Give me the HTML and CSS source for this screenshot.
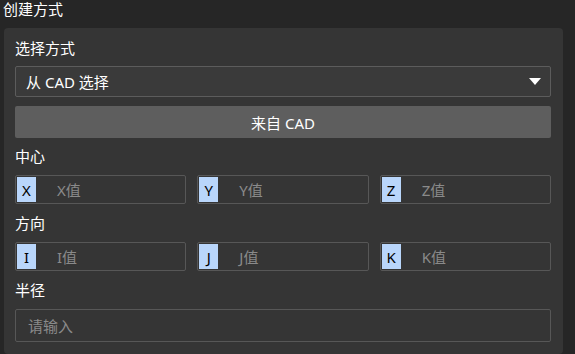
FILE: index.html
```html
<!DOCTYPE html>
<html lang="zh-CN">
<head>
  <meta charset="UTF-8" />
  <title>创建方式</title>
  <link rel="stylesheet" href="styles.css">
</head>
<body>
<div class="title">创建方式</div>

<div class="panel">
  <div class="label">选择方式</div>
  <div class="select">
    <span>从 CAD 选择</span>
    <span class="arrow"></span>
  </div>
  <button class="btn">来自 CAD</button>

  <div class="label">中心</div>
  <div class="row">
    <div class="field"><span class="prefix">X</span><span class="ph">X值</span></div>
    <div class="field"><span class="prefix">Y</span><span class="ph">Y值</span></div>
    <div class="field"><span class="prefix">Z</span><span class="ph">Z值</span></div>
  </div>

  <div class="label">方向</div>
  <div class="row">
    <div class="field"><span class="prefix">I</span><span class="ph">I值</span></div>
    <div class="field"><span class="prefix">J</span><span class="ph">J值</span></div>
    <div class="field"><span class="prefix">K</span><span class="ph">K值</span></div>
  </div>

  <div class="label">半径</div>
  <div class="input">请输入</div>
</div>
</body>
</html>
```

FILE: styles.css
```css
body {
  margin: 0;
  background-color: #262626;
  color: #ffffff;
  font-family: "Noto Sans", "Noto Sans CJK SC", sans-serif;
  font-size: 15px;
  width: 575px;
  height: 354px;
  overflow: hidden;
}

.title {
  height: 18px;
  line-height: 18px;
  padding-left: 3px;
}

.panel {
  margin: 10px 0 0 4px;
  width: 559px;
  box-sizing: border-box;
  padding: 8px 12px 12px 11px;
  background-color: #353535;
  border-radius: 4px;
  display: flex;
  flex-direction: column;
}

.label {
  height: 24px;
  line-height: 24px;
  margin-bottom: 6px;
}

.select {
  height: 31px;
  box-sizing: border-box;
  border: 1px solid #5c5c5c;
  background-color: #3a3a3a;
  border-radius: 2px;
  padding: 0 9px 0 10px;
  display: flex;
  align-items: center;
  justify-content: space-between;
}

.arrow {
  width: 0;
  height: 0;
  border-left: 6px solid transparent;
  border-right: 6px solid transparent;
  border-top: 7px solid #ffffff;
}

.btn {
  margin: 9px 0 6px;
  height: 32px;
  border: none;
  border-radius: 2px;
  background-color: #5e5e5e;
  color: #ffffff;
  font-family: inherit;
  font-size: 15px;
}

.row {
  display: grid;
  grid-template-columns: 1fr 1fr 1fr;
  column-gap: 11px;
  margin: 1px 0 7px;
}

.field {
  height: 29px;
  box-sizing: border-box;
  border: 1px solid #575757;
  border-radius: 2px;
  padding: 1px;
  display: flex;
  align-items: stretch;
}

.prefix {
  width: 19px;
  background-color: #b9d6fb;
  color: #000000;
  display: flex;
  align-items: center;
  justify-content: center;
}

.ph {
  padding-left: 21px;
  color: #8a8a8a;
  display: flex;
  align-items: center;
}

.input {
  margin-top: 1px;
  height: 33px;
  box-sizing: border-box;
  border: 1px solid #575757;
  border-radius: 2px;
  padding-left: 12px;
  color: #8a8a8a;
  display: flex;
  align-items: center;
}
```
